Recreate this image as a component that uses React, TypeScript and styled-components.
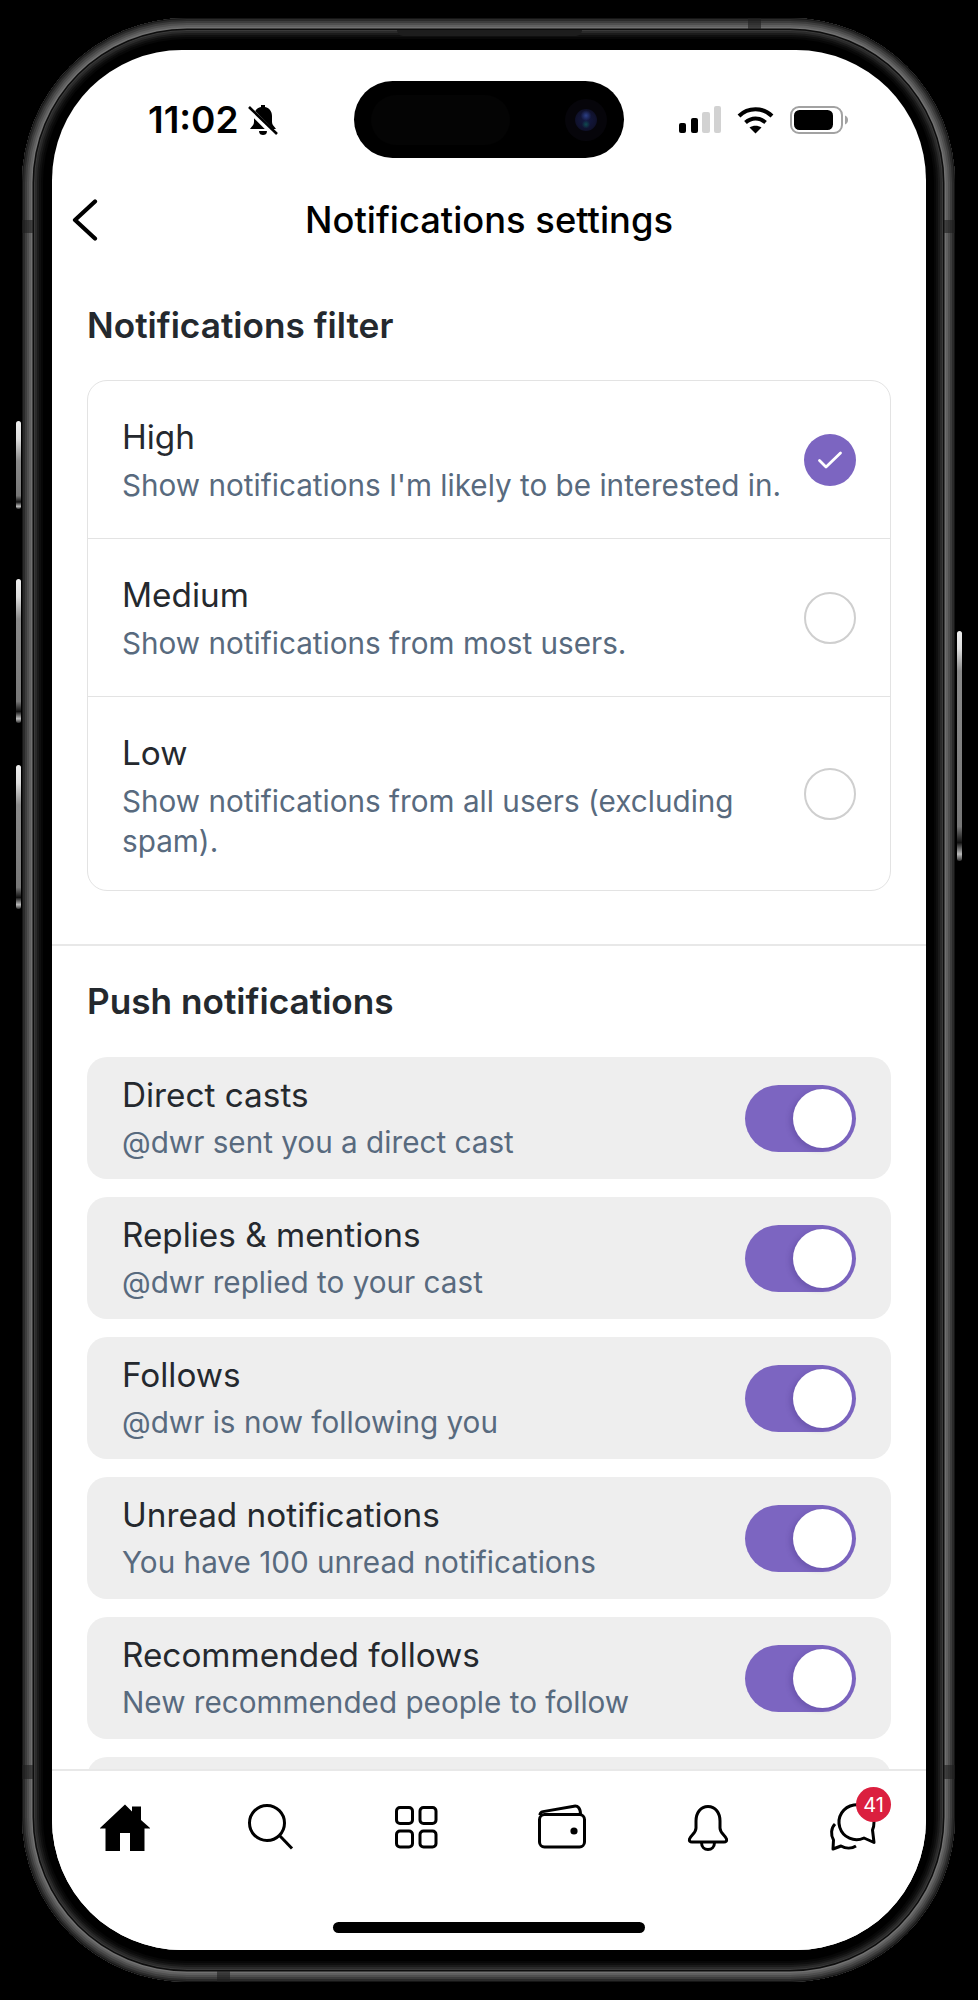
import styled, { createGlobalStyle } from 'styled-components';

const GlobalStyle = createGlobalStyle`
  html, body {
    margin: 0;
    padding: 0;
    background: #000;
  }
  * {
    box-sizing: border-box;
  }
`;

const PURPLE = '#7c65c1';

const Page = styled.div`
  width: 978px;
  height: 2000px;
  padding: 18px 23px 18px 22px;
  background: #000;
  font-family: Inter, 'Liberation Sans', sans-serif;
`;

const Device = styled.div`
  position: relative;
  width: 933px;
  height: 1964px;
  padding: 32px 29px 32px 30px;
  border-radius: 165px;
  background: #000;
  box-shadow:
    inset 0 0 0 1px #151515,
    inset 0 0 0 3px #2a2a2a,
    inset 0 0 0 5px #3d3d3d,
    inset 0 0 0 7px #4f4f4f,
    inset 0 0 0 9px #606060,
    inset 0 0 0 10.5px #707070,
    inset 0 0 0 12px #0d0d0d,
    inset 0 0 0 13px #3a3a3a,
    inset 0 0 0 15px #2a2a2a,
    inset 0 0 0 17px #1b1b1b,
    inset 0 0 0 19px #0f0f0f,
    inset 0 0 0 21px #070707;
`;

const SideButton = styled.div<{ $top: number; $height: number; $right?: boolean }>`
  position: absolute;
  top: ${(props) => props.$top}px;
  ${(props) => (props.$right ? 'right: -7px;' : 'left: -6px;')}
  width: 5px;
  height: ${(props) => props.$height}px;
  border-radius: 3px;
  background: linear-gradient(180deg, #eee 0, #ddd 18px, #8a8a8a 40px, #777 85%, #111 92%, #bbb 97%, #333 100%);
`;

const RimBand = styled.div<{ $left?: number; $right?: number; $top?: number; $bottom?: number; $w: number; $h: number }>`
  position: absolute;
  ${(props) => (props.$left !== undefined ? `left: ${props.$left}px;` : '')}
  ${(props) => (props.$right !== undefined ? `right: ${props.$right}px;` : '')}
  ${(props) => (props.$top !== undefined ? `top: ${props.$top}px;` : '')}
  ${(props) => (props.$bottom !== undefined ? `bottom: ${props.$bottom}px;` : '')}
  width: ${(props) => props.$w}px;
  height: ${(props) => props.$h}px;
  background: rgba(30, 30, 30, 0.6);
`;

const Speaker = styled.div`
  position: absolute;
  top: 12px;
  left: 375px;
  width: 185px;
  height: 6px;
  border-radius: 0 0 6px 6px;
  background: #1d1d1d;
`;

const Screen = styled.div`
  display: flex;
  flex-direction: column;
  width: 874px;
  height: 1900px;
  border-radius: 130px;
  overflow: hidden;
  background: #fff;
`;

const StatusBar = styled.div`
  display: grid;
  grid-template-columns: 302px 270px 1fr;
  flex: none;
  height: 108px;
  padding-top: 31px;
`;

const StatusLeft = styled.div`
  display: flex;
  align-items: center;
  gap: 9px;
  height: 77px;
  padding-left: 96px;
`;

const Clock = styled.span`
  font-size: 37px;
  font-weight: 600;
  color: #000;
`;

const Island = styled.div`
  display: flex;
  align-items: center;
  justify-content: space-between;
  height: 77px;
  padding: 0 17px;
  border-radius: 39px;
  background: #000;
`;

const Sensor = styled.div`
  width: 139px;
  height: 50px;
  border-radius: 25px;
  background: #040404;
`;

const Camera = styled.div`
  display: flex;
  align-items: center;
  justify-content: center;
  width: 42px;
  height: 42px;
  border-radius: 50%;
  background: #06050a;
`;

const Lens = styled.div`
  width: 22px;
  height: 22px;
  border-radius: 50%;
  background:
    radial-gradient(circle at 50% 70%, #0f4a50 0, rgba(15, 74, 80, 0) 22%),
    radial-gradient(circle at 50% 30%, #2c3f86 0, rgba(44, 63, 134, 0) 28%),
    radial-gradient(circle at 50% 50%, #141a44 0, #10122e 60%, #090914 100%);
`;

const StatusRight = styled.div`
  display: flex;
  align-items: center;
  gap: 16px;
  height: 77px;
  padding-left: 55px;
`;

const NavBar = styled.div`
  display: grid;
  grid-template-columns: 1fr auto 1fr;
  align-items: center;
  flex: none;
  height: 124px;
  padding: 0 20px;
`;

const NavTitle = styled.h1`
  margin: 0;
  font-size: 36.3px;
  font-weight: 500;
  line-height: 44px;
  color: #000;
`;

const Scroll = styled.div`
  flex: 1;
  min-height: 0;
  overflow: hidden;
`;

const Section = styled.section<{ $top: number; $bottom: number }>`
  padding: ${(props) => props.$top}px 35px ${(props) => props.$bottom}px 35px;
`;

const Heading = styled.h2<{ $gap: number }>`
  margin: 0 0 ${(props) => props.$gap}px;
  font-size: 35.2px;
  font-weight: 600;
  line-height: 44px;
  color: #24292e;
`;

const FilterCard = styled.div`
  border: 1.5px solid #e3e3e3;
  border-radius: 20px;
`;

const FilterRow = styled.div`
  display: flex;
  align-items: center;
  justify-content: space-between;
  min-height: 158px;
  padding: 0 34px;
  border-bottom: 1.5px solid #e3e3e3;

  &:last-child {
    border-bottom: none;
  }
`;

const FilterText = styled.div`
  align-self: flex-start;
  width: 680px;
  padding: 35px 0 29px;
`;

const RowText = styled.div`
  width: 640px;
`;

const RowTitle = styled.div`
  margin-bottom: 7px;
  font-size: 33.3px;
  line-height: 42px;
  color: #25292e;
`;

const RowSub = styled.div`
  font-size: 29.7px;
  line-height: 40px;
  color: #586a7e;
`;

const Radio = styled.div<{ $checked?: boolean }>`
  display: flex;
  align-items: center;
  justify-content: center;
  flex: none;
  width: 52px;
  height: 52px;
  border-radius: 50%;
  border: ${(props) => (props.$checked ? 'none' : '2.5px solid #cfcfcf')};
  background: ${(props) => (props.$checked ? PURPLE : '#fff')};
`;

const Divider = styled.div`
  height: 2px;
  background: #e8e8e8;
`;

const PushList = styled.div`
  display: flex;
  flex-direction: column;
  gap: 18px;
`;

const PushRow = styled.div`
  display: flex;
  align-items: center;
  justify-content: space-between;
  height: 122px;
  padding: 0 35px;
  border-radius: 20px;
  background: #eee;

  ${RowTitle} {
    margin-bottom: 6px;
  }
`;

const Toggle = styled.div`
  display: flex;
  align-items: center;
  justify-content: flex-end;
  flex: none;
  width: 111px;
  height: 67px;
  padding-right: 4px;
  border-radius: 34px;
  background: ${PURPLE};
`;

const Knob = styled.div`
  width: 59px;
  height: 59px;
  border-radius: 50%;
  background: #fff;
  box-shadow: -3px 2px 5px rgba(60, 40, 120, 0.25);
`;

const TabBar = styled.nav`
  display: flex;
  flex-direction: column;
  align-items: center;
  flex: none;
  height: 181px;
  padding-top: 31px;
  border-top: 2px solid #e8e8e8;
  background: #fff;
`;

const TabRow = styled.div`
  display: flex;
  width: 100%;
`;

const Tab = styled.div`
  display: flex;
  justify-content: center;
  flex: 1;
`;

const TabIcon = styled.div`
  position: relative;
  width: 50px;
  height: 50px;
`;

const Badge = styled.span`
  position: absolute;
  top: -15px;
  left: 28px;
  display: flex;
  align-items: center;
  justify-content: center;
  width: 35px;
  height: 35px;
  border-radius: 50%;
  background: #db1f3f;
  color: #fff;
  font-size: 20px;
`;

const HomeIndicator = styled.div`
  width: 312px;
  height: 11px;
  margin-top: 70px;
  border-radius: 6px;
  background: #000;
`;

const filters = [
  { title: 'High', sub: "Show notifications I'm likely to be interested in.", checked: true },
  { title: 'Medium', sub: 'Show notifications from most users.' },
  { title: 'Low', sub: 'Show notifications from all users (excluding spam).' },
];

const pushes = [
  { title: 'Direct casts', sub: '@dwr sent you a direct cast' },
  { title: 'Replies & mentions', sub: '@dwr replied to your cast' },
  { title: 'Follows', sub: '@dwr is now following you' },
  { title: 'Unread notifications', sub: 'You have 100 unread notifications' },
  { title: 'Recommended follows', sub: 'New recommended people to follow' },
  { title: '', sub: '' },
];

function MutedBell() {
  return (
    <svg width="30" height="32" viewBox="0 0 30 32">
      <path d="M13 1h4v2c5 1 7 5 7 9v6c0 3 2 4 4 7H2c2-3 4-4 4-7v-6c0-4 2-8 7-9z" fill="#000" />
      <path d="M11 27h8c0 3-2 4-4 4s-4-1-4-4z" fill="#000" />
      <path d="M1 5l26 26" stroke="#fff" strokeWidth="6" />
      <path d="M1 3l28 27" stroke="#000" strokeWidth="2.6" />
    </svg>
  );
}

function Signal() {
  return (
    <svg width="42" height="28" viewBox="0 0 42 28">
      <rect x="0" y="17" width="7" height="10" rx="2" fill="#000" />
      <rect x="12" y="12" width="7" height="15" rx="2" fill="#000" />
      <rect x="23" y="6" width="8" height="21" rx="2" fill="#d2d2d2" />
      <rect x="35" y="0" width="7" height="27" rx="2" fill="#d2d2d2" />
    </svg>
  );
}

function Wifi() {
  return (
    <svg width="37" height="28" viewBox="0 0 37 28">
      <path d="M2 10C11 1 26 1 35 10" fill="none" stroke="#000" strokeWidth="4" />
      <path d="M8.5 16.5C14.5 11 22.5 11 28.5 16.5" fill="none" stroke="#000" strokeWidth="4" />
      <path d="M12.5 21.5C16 19 21 19 24.5 21.5L18.5 27.5Z" fill="#000" />
    </svg>
  );
}

function Battery() {
  return (
    <svg width="59" height="28" viewBox="0 0 59 28">
      <rect x="1" y="1" width="51" height="26" rx="8" fill="none" stroke="#a2a2a2" strokeWidth="2" />
      <rect x="4" y="4" width="39" height="20" rx="5.5" fill="#000" />
      <path d="M55 9.5c2 .8 3 2.5 3 4.5s-1 3.7-3 4.5z" fill="#a2a2a2" />
    </svg>
  );
}

function BackIcon() {
  return (
    <svg width="26" height="42" viewBox="0 0 26 42">
      <path d="M23 2.5L3 21l20 18.5" fill="none" stroke="#000" strokeWidth="4.2" strokeLinecap="round" strokeLinejoin="round" />
    </svg>
  );
}

function CheckIcon() {
  return (
    <svg width="26" height="20" viewBox="0 0 26 20">
      <path d="M2.5 10.5L9 17 23.5 3" fill="none" stroke="#fff" strokeWidth="2.8" strokeLinecap="round" strokeLinejoin="round" />
    </svg>
  );
}

function HomeIcon() {
  return (
    <svg width="50" height="50" viewBox="0 0 50 50">
      <path d="M25 2.5L32 9.5V4.5H41V18L50.5 26.5H44.5V49H30V31H20V49H5.5V26.5H-.5Z" fill="#000" />
    </svg>
  );
}

function SearchIcon() {
  return (
    <svg width="50" height="50" viewBox="0 0 50 50">
      <circle cx="21" cy="21" r="17.5" fill="none" stroke="#000" strokeWidth="3" />
      <path d="M33.5 33.5L46 46.5" fill="none" stroke="#000" strokeWidth="3" />
    </svg>
  );
}

function GridIcon() {
  return (
    <svg width="50" height="50" viewBox="0 0 50 50" fill="none" stroke="#000" strokeWidth="3">
      <rect x="5.5" y="5.5" width="16" height="16" rx="3.5" />
      <rect x="29" y="5.5" width="16" height="16" rx="3.5" />
      <rect x="5.5" y="29" width="16" height="16" rx="3.5" />
      <rect x="29" y="29" width="16" height="16" rx="3.5" />
    </svg>
  );
}

function WalletIcon() {
  return (
    <svg width="50" height="50" viewBox="0 0 50 50">
      <rect x="2.5" y="12.5" width="45" height="32.5" rx="5" fill="none" stroke="#000" strokeWidth="3" />
      <path d="M3 13C3 11 4 10 6 9.6L37 4.2C41 3.6 43.5 6 43.5 12.5" fill="none" stroke="#000" strokeWidth="3" />
      <circle cx="37" cy="29" r="3.6" fill="#000" />
    </svg>
  );
}

function BellIcon() {
  return (
    <svg width="50" height="50" viewBox="0 0 50 50" fill="none" stroke="#000" strokeWidth="3" strokeLinejoin="round">
      <path d="M25 4.5C17.5 4.5 13 11 13 19V26C13 31 8 33 6.5 37C6 39 7 40 9 40H41C43 40 44 39 43.5 37C42 33 37 31 37 26V19C37 11 32.5 4.5 25 4.5Z" />
      <path d="M18.5 40.5C18.5 45 21.5 47.5 25 47.5S31.5 45 31.5 40.5" />
    </svg>
  );
}

function ChatIcon() {
  return (
    <svg width="50" height="50" viewBox="0 0 50 50" fill="none" stroke="#000" strokeWidth="3" strokeLinejoin="round">
      <path d="M44.5 28L46 40.5L36 36A17.5 17.5 0 1 1 46 20C46 23 45.5 26 44.5 28Z" />
      <path d="M7 22C3 26 2.5 33 5.5 38L5 47L13 44C18 47 24 46.5 28 44" />
    </svg>
  );
}

export default function App() {
  return (
    <Page>
      <GlobalStyle />
      <Device>
        <SideButton $top={403} $height={88} />
        <SideButton $top={561} $height={144} />
        <SideButton $top={747} $height={144} />
        <SideButton $right $top={613} $height={230} />
        <RimBand $left={0} $top={202} $w={11} $h={13} />
        <RimBand $right={0} $top={202} $w={11} $h={13} />
        <RimBand $left={0} $bottom={203} $w={11} $h={14} />
        <RimBand $right={0} $bottom={203} $w={11} $h={14} />
        <RimBand $right={194} $top={0} $w={13} $h={11} />
        <RimBand $left={195} $bottom={0} $w={13} $h={11} />
        <Speaker />
        <Screen>
          <StatusBar>
            <StatusLeft>
              <Clock>11:02</Clock>
              <MutedBell />
            </StatusLeft>
            <Island>
              <Sensor />
              <Camera>
                <Lens />
              </Camera>
            </Island>
            <StatusRight>
              <Signal />
              <Wifi />
              <Battery />
            </StatusRight>
          </StatusBar>
          <NavBar>
            <BackIcon />
            <NavTitle>Notifications settings</NavTitle>
          </NavBar>
          <Scroll>
            <Section $top={21} $bottom={53}>
              <Heading $gap={33}>Notifications filter</Heading>
              <FilterCard>
                {filters.map((filter) => (
                  <FilterRow key={filter.title}>
                    <FilterText>
                      <RowTitle>{filter.title}</RowTitle>
                      <RowSub>{filter.sub}</RowSub>
                    </FilterText>
                    <Radio $checked={filter.checked}>{filter.checked && <CheckIcon />}</Radio>
                  </FilterRow>
                ))}
              </FilterCard>
            </Section>
            <Divider />
            <Section $top={33} $bottom={0}>
              <Heading $gap={34}>Push notifications</Heading>
              <PushList>
                {pushes.map((push, index) => (
                  <PushRow key={index}>
                    <RowText>
                      <RowTitle>{push.title}</RowTitle>
                      <RowSub>{push.sub}</RowSub>
                    </RowText>
                    <Toggle>
                      <Knob />
                    </Toggle>
                  </PushRow>
                ))}
              </PushList>
            </Section>
          </Scroll>
          <TabBar>
            <TabRow>
              <Tab>
                <TabIcon>
                  <HomeIcon />
                </TabIcon>
              </Tab>
              <Tab>
                <TabIcon>
                  <SearchIcon />
                </TabIcon>
              </Tab>
              <Tab>
                <TabIcon>
                  <GridIcon />
                </TabIcon>
              </Tab>
              <Tab>
                <TabIcon>
                  <WalletIcon />
                </TabIcon>
              </Tab>
              <Tab>
                <TabIcon>
                  <BellIcon />
                </TabIcon>
              </Tab>
              <Tab>
                <TabIcon>
                  <ChatIcon />
                  <Badge>41</Badge>
                </TabIcon>
              </Tab>
            </TabRow>
            <HomeIndicator />
          </TabBar>
        </Screen>
      </Device>
    </Page>
  );
}
